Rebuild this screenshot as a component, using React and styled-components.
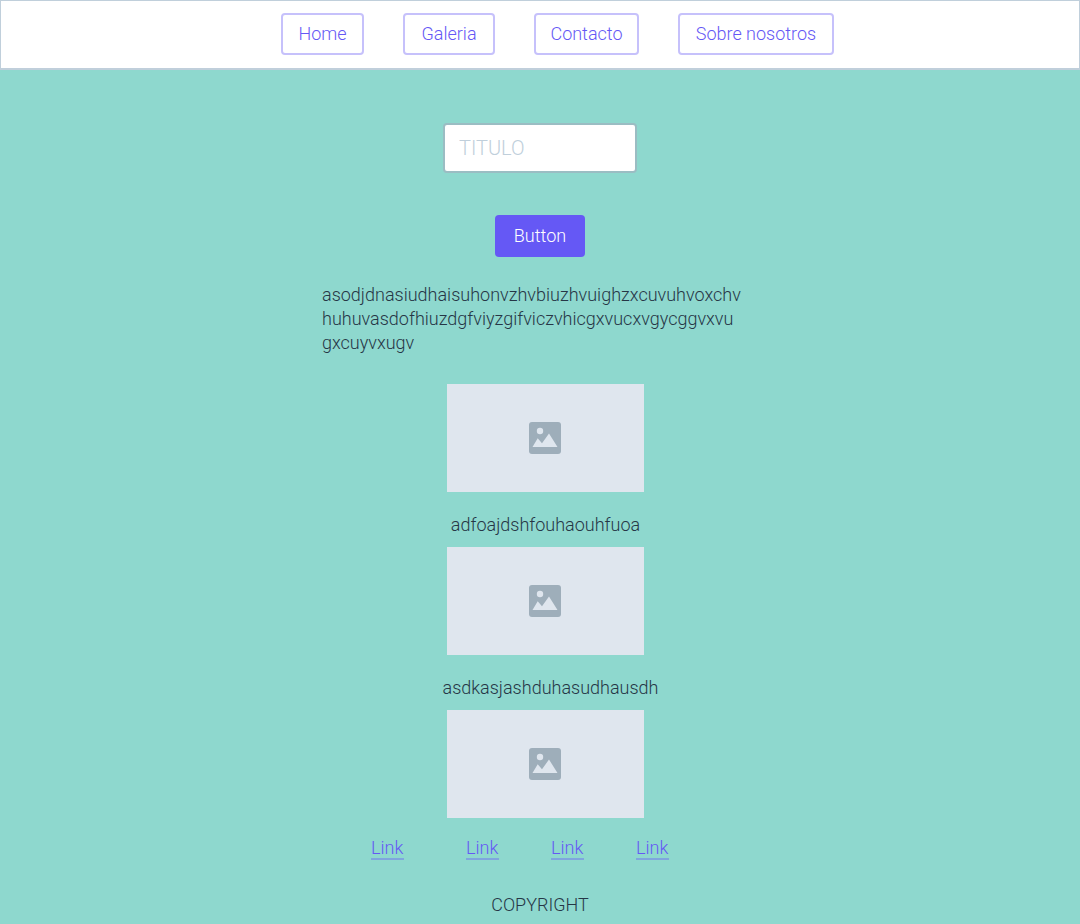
import React from "react";
import styled, { createGlobalStyle } from "styled-components";

const GlobalStyle = createGlobalStyle`
  *, *::before, *::after { box-sizing: border-box; }
  body {
    margin: 0;
    background: #8ed8ce;
    color: #263646;
    font: 300 18px/24px Roboto, "Open Sans", sans-serif;
  }
  button, input { font: inherit; }
`;

const Header = styled.header`
  padding: 12px 0 12px 35px;
  background: #fff;
  border: 1px solid #c0cfdb;
  border-bottom-width: 2px;
`;

const Nav = styled.nav`
  display: flex;
  flex-wrap: wrap;
  justify-content: center;
  gap: 12px 39px;
  padding-bottom: 1px;
`;

const NavButton = styled.button`
  flex: 0 0 ${({ $width }) => $width}px;
  height: 42px;
  padding: 0;
  color: #6558f5;
  background: #fff;
  border: 2px solid #c6c1fb;
  border-radius: 4px;
  white-space: nowrap;
  cursor: pointer;
`;

const Main = styled.main`
  display: flex;
  flex-direction: column;
  align-items: center;
  padding-top: 53px;
`;

const TitleInput = styled.input`
  width: 194px;
  height: 50px;
  padding: 0 14px;
  font-size: 20px;
  color: #263646;
  background: #fff;
  border: 2px solid #9bbdc3;
  border-radius: 4px;

  &::placeholder {
    color: #c0cfdb;
    opacity: 1;
  }
`;

const PrimaryButton = styled.button`
  width: 90px;
  height: 42px;
  margin-top: 42px;
  padding: 0;
  color: #fff;
  background: #6558f5;
  border: 0;
  border-radius: 4px;
  cursor: pointer;
`;

const Intro = styled.p`
  width: 436px;
  max-width: 100%;
  margin: 26px 0 29px;
`;

const Gallery = styled.section`
  display: flex;
  flex-direction: column;
  align-items: center;
  gap: 10px;
  padding-left: 11px;
`;

const Figure = styled.figure`
  display: flex;
  flex-direction: column;
  align-items: center;
  gap: 21px;
  margin: 0;
`;

const ImageBox = styled.div`
  display: grid;
  place-items: center;
  width: 197px;
  height: 108px;
  padding-right: 1px;
  background: #dfe6ee;
`;

const Caption = styled.figcaption`
  padding-left: ${({ $indent }) => $indent || 0}px;
`;

const Footer = styled.footer`
  display: flex;
  flex-direction: column;
  align-items: center;
  gap: 33px;
  padding: 18px 0 7px;
`;

const Links = styled.nav`
  display: flex;
  gap: 52px;
  padding-right: 40px;
`;

const TextLink = styled.a`
  width: 33px;
  padding-top: 2px;
  color: #6558f5;
  text-decoration: none;
  border-bottom: 2px solid #7ea6de;
  line-height: 20px;

  &:first-child { margin-right: 10px; }
`;

const Copyright = styled.p`
  margin: 0;
`;

const PictureIcon = () => (
  <svg width="32" height="32" viewBox="0 0 32 32" aria-hidden="true">
    <rect width="32" height="32" rx="3" fill="#9eaeba" />
    <circle cx="11" cy="9" r="3.2" fill="#dfe6ee" />
    <path d="M3.5 25 8.7 16.2 13 21.3 20 11.5 28.5 25Z" fill="#dfe6ee" />
  </svg>
);

const navItems = [
  { label: "Home", width: 83 },
  { label: "Galeria", width: 92 },
  { label: "Contacto", width: 105 },
  { label: "Sobre nosotros", width: 156 },
];

const pictures = [
  { caption: "adfoajdshfouhaouhfuoa", indent: 0 },
  { caption: "asdkasjashduhasudhausdh", indent: 10 },
  { caption: null },
];

const links = ["Link", "Link", "Link", "Link"];

export default function App() {
  return (
    <>
      <GlobalStyle />
      <Header>
        <Nav>
          {navItems.map(({ label, width }) => (
            <NavButton key={label} type="button" $width={width}>
              {label}
            </NavButton>
          ))}
        </Nav>
      </Header>
      <Main>
        <TitleInput type="text" placeholder="TITULO" aria-label="Titulo" />
        <PrimaryButton type="button">Button</PrimaryButton>
        <Intro>
          asodjdnasiudhaisuhonvzhvbiuzhvuighzxcuvuhvoxchv
          <br />
          huhuvasdofhiuzdgfviyzgifviczvhicgxvucxvgycggvxvu
          <br />
          gxcuyvxugv
        </Intro>
        <Gallery>
          {pictures.map(({ caption, indent }, i) => (
            <Figure key={i}>
              <ImageBox>
                <PictureIcon />
              </ImageBox>
              {caption && <Caption $indent={indent}>{caption}</Caption>}
            </Figure>
          ))}
        </Gallery>
      </Main>
      <Footer>
        <Links>
          {links.map((label, i) => (
            <TextLink key={i} href="#">
              {label}
            </TextLink>
          ))}
        </Links>
        <Copyright>COPYRIGHT</Copyright>
      </Footer>
    </>
  );
}
